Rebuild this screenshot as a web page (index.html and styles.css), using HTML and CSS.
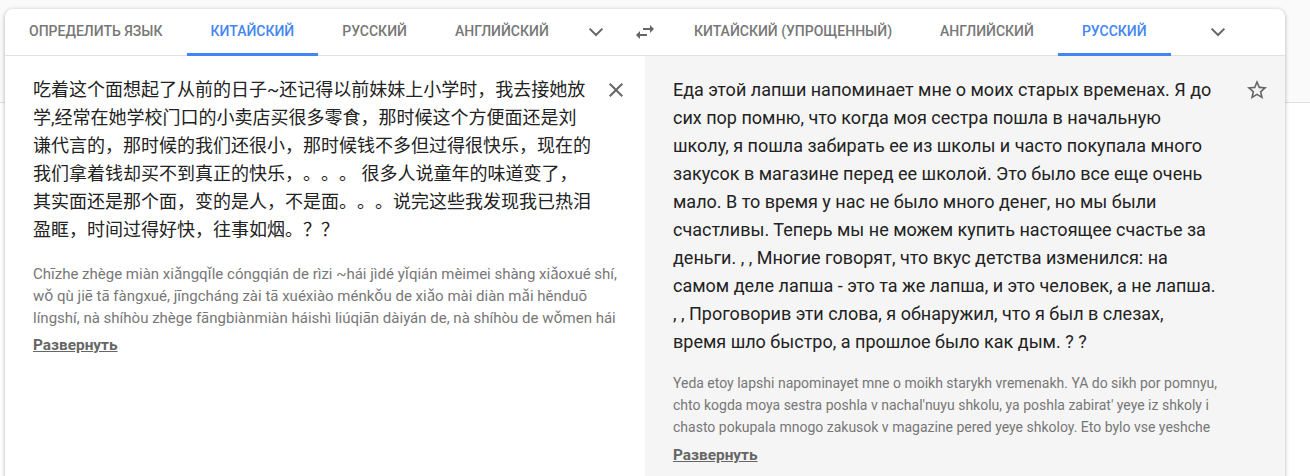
FILE: index.html
```html
<!DOCTYPE html>
<html lang="ru">
<head>
    <meta charset="UTF-8">
    <title>Переводчик</title>
    <link rel="stylesheet" href="styles.css">
</head>
<body>
    <!-- Grey band behind the top of the card -->
    <div class="page-band"></div>

    <div class="card">
        <!-- Language tabs -->
        <div class="lang-bar">
            <div class="lang-side lang-side-source">
                <div class="lang-tab">Определить язык</div>
                <div class="lang-tab lang-tab-active">Китайский</div>
                <div class="lang-tab">Русский</div>
                <div class="lang-tab">Английский</div>
                <svg class="chevron chevron-source" viewBox="0 0 24 24" width="24" height="24"><path d="M5.6 8.6 12 15l6.4-6.4" fill="none" stroke="#666" stroke-width="2"/></svg>
                <svg class="swap" viewBox="0 0 24 24" width="24" height="24"><path d="M6.99 11 3 15l3.99 4v-3H14v-2H6.99v-3zM21 9l-3.99-4v3H10v2h7.01v3L21 9z" fill="#666"/></svg>
            </div>
            <div class="lang-side lang-side-target">
                <div class="lang-tab">Китайский (упрощенный)</div>
                <div class="lang-tab">Английский</div>
                <div class="lang-tab lang-tab-active">Русский</div>
                <svg class="chevron chevron-target" viewBox="0 0 24 24" width="24" height="24"><path d="M5.6 8.6 12 15l6.4-6.4" fill="none" stroke="#666" stroke-width="2"/></svg>
            </div>
        </div>

        <!-- Source and translation -->
        <div class="panels">
            <div class="panel panel-source">
                <div class="panel-body">
                    <p class="main-text zh" lang="zh-CN">吃着这个面想起了从前的日子~还记得以前妹妹上小学时，我去接她放学,经常在她学校门口的小卖店买很多零食，那时候这个方便面还是刘谦代言的，那时候的我们还很小，那时候钱不多但过得很快乐，现在的我们拿着钱却买不到真正的快乐，。。。 很多人说童年的味道变了，其实面还是那个面，变的是人，不是面。。。说完这些我发现我已热泪盈眶，时间过得好快，往事如烟。？？</p>
                    <p class="translit">Chīzhe zhège miàn xiǎngqǐle cóngqián de rìzi ~hái jìdé yǐqián mèimei shàng xiǎoxué shí, wǒ qù jiē tā fàngxué, jīngcháng zài tā xuéxiào ménkǒu de xiǎo mài diàn mǎi hěnduō língshí, nà shíhòu zhège fāngbiànmiàn háishì liúqiān dàiyán de, nà shíhòu de wǒmen hái</p>
                    <a class="expand" href="#">Развернуть</a>
                </div>
                <svg class="panel-icon" viewBox="0 0 24 24" width="24" height="24"><path d="M19 6.41 17.59 5 12 10.59 6.41 5 5 6.41 10.59 12 5 17.59 6.41 19 12 13.41 17.59 19 19 17.59 13.41 12z" fill="#666"/></svg>
            </div>
            <div class="panel panel-target">
                <div class="panel-body">
                    <p class="main-text">Еда этой лапши напоминает мне о моих старых временах. Я до сих пор помню, что когда моя сестра пошла в начальную школу, я пошла забирать ее из школы и часто покупала много закусок в магазине перед ее школой. Это было все еще очень мало. В то время у нас не было много денег, но мы были счастливы. Теперь мы не можем купить настоящее счастье за деньги. , , Многие говорят, что вкус детства изменился: на самом деле лапша - это та же лапша, и это человек, а не лапша. , , Проговорив эти слова, я обнаружил, что я был в слезах, время шло быстро, а прошлое было как дым. ? ?</p>
                    <p class="translit">Yeda etoy lapshi napominayet mne o moikh starykh vremenakh. YA do sikh por pomnyu, chto kogda moya sestra poshla v nachal'nuyu shkolu, ya poshla zabirat' yeye iz shkoly i chasto pokupala mnogo zakusok v magazine pered yeye shkoloy. Eto bylo vse yeshche</p>
                    <a class="expand" href="#">Развернуть</a>
                </div>
                <svg class="panel-icon" viewBox="0 0 24 24" width="24" height="24"><path d="m22 9.24-7.19-.62L12 2 9.19 8.63 2 9.24l5.46 4.73L5.82 21 12 17.27 18.18 21l-1.63-7.03L22 9.24zM12 15.4l-3.76 2.27 1-4.28-3.32-2.88 4.38-.38L12 6.1l1.71 4.04 4.38.38-3.32 2.88 1 4.28L12 15.4z" fill="#666"/></svg>
            </div>
        </div>
    </div>
</body>
</html>
```
FILE: styles.css
```css
/* Base styles */
html, body {
    height: 100%;
}

body {
    margin: 0;
    position: relative;
    overflow: hidden;
    background: #fff;
    font-family: Roboto, "Noto Sans CJK SC", sans-serif;
}

.page-band {
    position: absolute;
    top: 0;
    left: 0;
    right: 0;
    height: 102px;
    background: #fafafa;
    border-bottom: 1px solid #e0e0e0;
}

/* Card */
.card {
    position: relative;
    margin: 9px 25px 0 5px;
    height: 480px;
    background: #fff;
    border-radius: 8px;
    box-shadow: 0 1px 4px rgba(0, 0, 0, 0.3);
    overflow: hidden;
}

/* Language tabs */
.lang-bar {
    display: flex;
    height: 46px;
    border-bottom: 1px solid #e0e0e0;
}

.lang-side {
    display: flex;
    align-items: stretch;
}

.lang-side-source {
    width: 665px;
}

.lang-tab {
    display: flex;
    align-items: center;
    padding: 0 24px;
    border-bottom: 3px solid transparent;
    margin-bottom: -1px;
    color: #777;
    font-size: 14px;
    font-weight: 500;
    text-transform: uppercase;
}

.lang-tab-active {
    color: #4285f4;
    border-bottom-color: #4285f4;
}

.chevron,
.swap {
    align-self: center;
    flex-shrink: 0;
}

.chevron-source {
    margin-left: 11px;
}

.swap {
    margin-left: 25px;
}

.chevron-target {
    margin-left: 35px;
}

/* Panels */
.panels {
    display: flex;
    height: 100%;
}

.panel {
    display: flex;
    box-sizing: border-box;
    padding: 20px 0 0 28px;
}

.panel-source {
    width: 640px;
    background: #fff;
}

.panel-target {
    flex: 1;
    background: #f5f5f5;
}

.panel-source .panel-body {
    width: 558px;
}

.panel-target .panel-body {
    width: 545px;
}

.panel-icon {
    flex-shrink: 0;
    margin-top: 2px;
}

.panel-source .panel-icon {
    margin-left: 13px;
}

.panel-target .panel-icon {
    margin-left: 27px;
}

.main-text {
    margin: 0;
    color: #222;
    font-size: 18px;
    line-height: 28px;
}

.zh {
    line-height: 27.9px;
    text-spacing-trim: space-all;
}

.translit {
    margin: 20px 0 6px;
    height: 66px;
    overflow: hidden;
    color: #777;
    font-size: 14px;
    line-height: 22px;
}

.panel-source .translit {
    font-size: 15px;
    width: 586px;
}

.panel-target .translit {
    margin: 16px 0 7px;
}

.expand {
    color: #666;
    font-size: 15.4px;
    font-weight: 700;
    line-height: 20px;
}
```
